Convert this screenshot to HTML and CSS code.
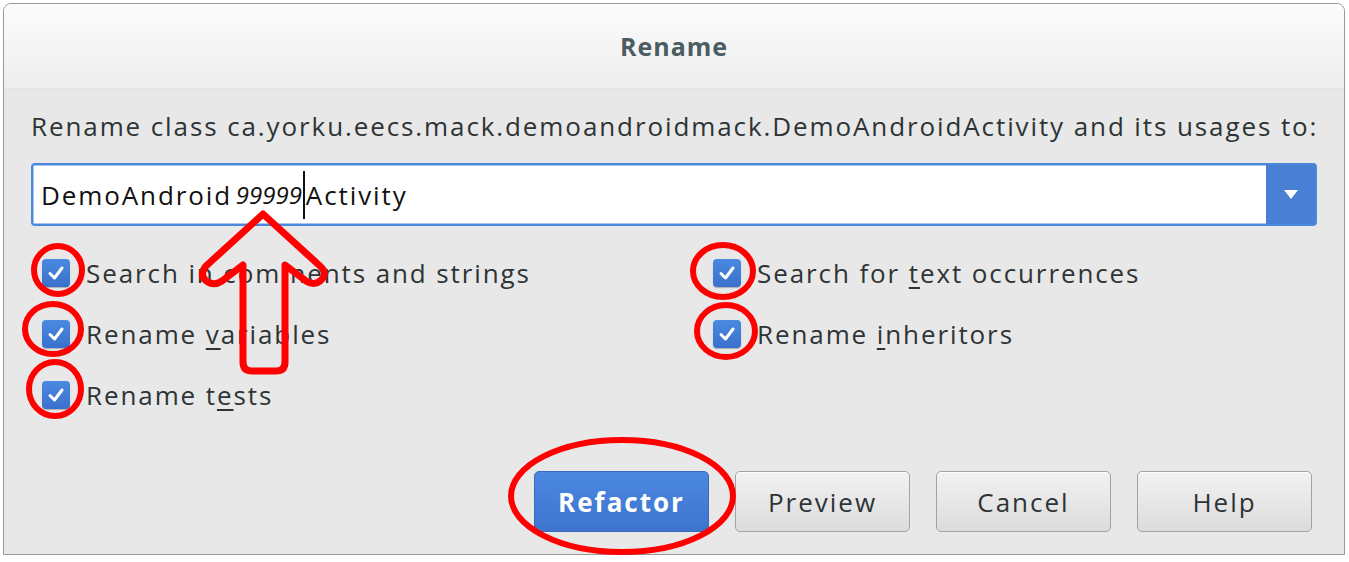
FILE: index.html
```html
<!DOCTYPE html>
<html lang="en">
<head>
    <meta charset="UTF-8">
    <title>Rename</title>
    <link rel="stylesheet" href="styles.css">
</head>
<body>
    <div class="dialog">
        <div class="titlebar">Rename</div>
        <div class="content">
            <p class="prompt">Rename class ca.yorku.eecs.mack.demoandroidmack.DemoAndroidActivity and its usages to:</p>

            <div class="combo">
                <div class="combo-text">DemoAndroid <i class="num">99999</i><span class="caret"></span>Activity</div>
                <div class="combo-btn"><span class="tri"></span></div>
            </div>

            <div class="options">
                <label class="opt"><span class="box"><svg viewBox="0 0 28 28"><path d="M8 14.5 L12.5 19 L20 9" fill="none" stroke="#fff" stroke-width="3" stroke-linecap="round" stroke-linejoin="round"/></svg></span><span>Search in comments and strings</span></label>
                <label class="opt"><span class="box"><svg viewBox="0 0 28 28"><path d="M8 14.5 L12.5 19 L20 9" fill="none" stroke="#fff" stroke-width="3" stroke-linecap="round" stroke-linejoin="round"/></svg></span><span>Search for <u>t</u>ext occurrences</span></label>
                <label class="opt"><span class="box"><svg viewBox="0 0 28 28"><path d="M8 14.5 L12.5 19 L20 9" fill="none" stroke="#fff" stroke-width="3" stroke-linecap="round" stroke-linejoin="round"/></svg></span><span>Rename <u>v</u>ariables</span></label>
                <label class="opt"><span class="box"><svg viewBox="0 0 28 28"><path d="M8 14.5 L12.5 19 L20 9" fill="none" stroke="#fff" stroke-width="3" stroke-linecap="round" stroke-linejoin="round"/></svg></span><span>Rename <u>i</u>nheritors</span></label>
                <label class="opt"><span class="box"><svg viewBox="0 0 28 28"><path d="M8 14.5 L12.5 19 L20 9" fill="none" stroke="#fff" stroke-width="3" stroke-linecap="round" stroke-linejoin="round"/></svg></span><span>Rename t<u>e</u>sts</span></label>
            </div>

            <div class="buttons">
                <button class="btn primary">Refactor</button>
                <button class="btn">Preview</button>
                <button class="btn">Cancel</button>
                <button class="btn">Help</button>
            </div>
        </div>
    </div>

    <!-- red hand-drawn annotations over the dialog -->
    <svg class="marks" width="1349" height="562" viewBox="0 0 1349 562">
        <g fill="none" stroke="#f00" stroke-width="6">
            <ellipse cx="58" cy="270" rx="24" ry="24"/>
            <ellipse cx="53" cy="329" rx="28" ry="25"/>
            <ellipse cx="55" cy="389" rx="26" ry="27"/>
            <ellipse cx="723" cy="271" rx="30" ry="26"/>
            <ellipse cx="726" cy="331" rx="29" ry="26"/>
            <ellipse cx="622" cy="496" rx="111" ry="56"/>
            <path d="M263 214 L206 266 Q198 276 208 282 Q214 286 222 281 L243 265 L243 362 Q243 371 252 371 L276 371 Q285 371 285 362 L285 265 L306 281 Q314 286 320 281 Q329 274 320 266 Z" stroke-linejoin="round" stroke-width="7"/>
        </g>
    </svg>
</body>
</html>
```

FILE: styles.css
```css
body {
    margin: 0;
    background: #fff;
    font-family: "Open Sans", "DejaVu Sans", sans-serif;
    color: #2e3436;
}
.dialog {
    margin: 3px 4px 0 3px;
    height: 552px;
    box-sizing: border-box;
    border: 1px solid #9a9a9a;
    border-radius: 8px 8px 0 0;
    background: #e8e8e8;
    display: flex;
    flex-direction: column;
    overflow: hidden;
}
.titlebar {
    height: 84px;
    flex: none;
    display: flex;
    align-items: center;
    justify-content: center;
    font-size: 25px;
    font-weight: bold;
    letter-spacing: 1px;
    color: #4b5c63;
    background: linear-gradient(#fcfcfc, #ededed);
    border-bottom: 1px solid #e4e4e4;
}
.content {
    flex: 1;
    padding: 19px 27px 0 27px;
    display: flex;
    flex-direction: column;
}
.prompt {
    margin: 0;
    font-size: 26px;
    line-height: 36px;
    letter-spacing: 1.9px;
    white-space: nowrap;
}
.combo {
    margin-top: 19px;
    height: 63px;
    box-sizing: border-box;
    display: flex;
    border: 2px solid #4a89dc;
    border-radius: 4px;
    box-shadow: inset 0 0 0 1px #a8c6ee;
    background: #fff;
}
.combo-text {
    flex: 1;
    display: flex;
    align-items: center;
    padding-left: 8px;
    font-size: 26px;
    letter-spacing: 1.9px;
    color: #111;
    white-space: pre;
}
.num {
    font-style: italic;
    font-size: 24px;
    letter-spacing: 0;
    margin-left: -5px;
}
.caret {
    display: inline-block;
    width: 2px;
    height: 48px;
    background: #111;
    margin: 0 1px;
}
.combo-btn {
    width: 49px;
    background: #4a7fd6;
    display: flex;
    align-items: center;
    justify-content: center;
}
.tri {
    width: 0;
    height: 0;
    border-left: 7px solid transparent;
    border-right: 7px solid transparent;
    border-top: 9px solid #fff;
}
.options {
    margin-top: 16px;
    padding-left: 11px;
    display: grid;
    grid-template-columns: 671px 1fr;
    grid-auto-rows: 61px;
}
.opt {
    display: flex;
    align-items: center;
    gap: 16px;
    font-size: 26px;
    letter-spacing: 1.9px;
    white-space: nowrap;
}
.opt u {
    text-underline-offset: 4px;
    text-decoration-thickness: 2px;
}
.box {
    width: 28px;
    height: 28px;
    border-radius: 4px;
    background: linear-gradient(#4a8ae0, #3a70cc);
    box-shadow: 0 1px 1px rgba(0, 0, 0, 0.25);
    display: flex;
    flex: none;
}
.box svg {
    width: 28px;
    height: 28px;
}
.buttons {
    margin-top: 46px;
    display: flex;
    justify-content: flex-end;
    gap: 26px;
    padding-right: 5px;
}
.btn {
    width: 175px;
    height: 61px;
    font-family: inherit;
    font-size: 26px;
    letter-spacing: 2px;
    color: #2e3436;
    border: 1px solid #a2a2a2;
    border-radius: 5px;
    background: linear-gradient(#f2f2f2, #dcdcdc);
    box-shadow: inset 0 1px 0 #fff;
}
.btn.primary {
    color: #fff;
    font-weight: bold;
    border-color: #3a6ab8;
    background: linear-gradient(#4c88e0, #3d74cf);
    box-shadow: none;
}
.marks {
    position: absolute;
    left: 0;
    top: 0;
    pointer-events: none;
}
```
